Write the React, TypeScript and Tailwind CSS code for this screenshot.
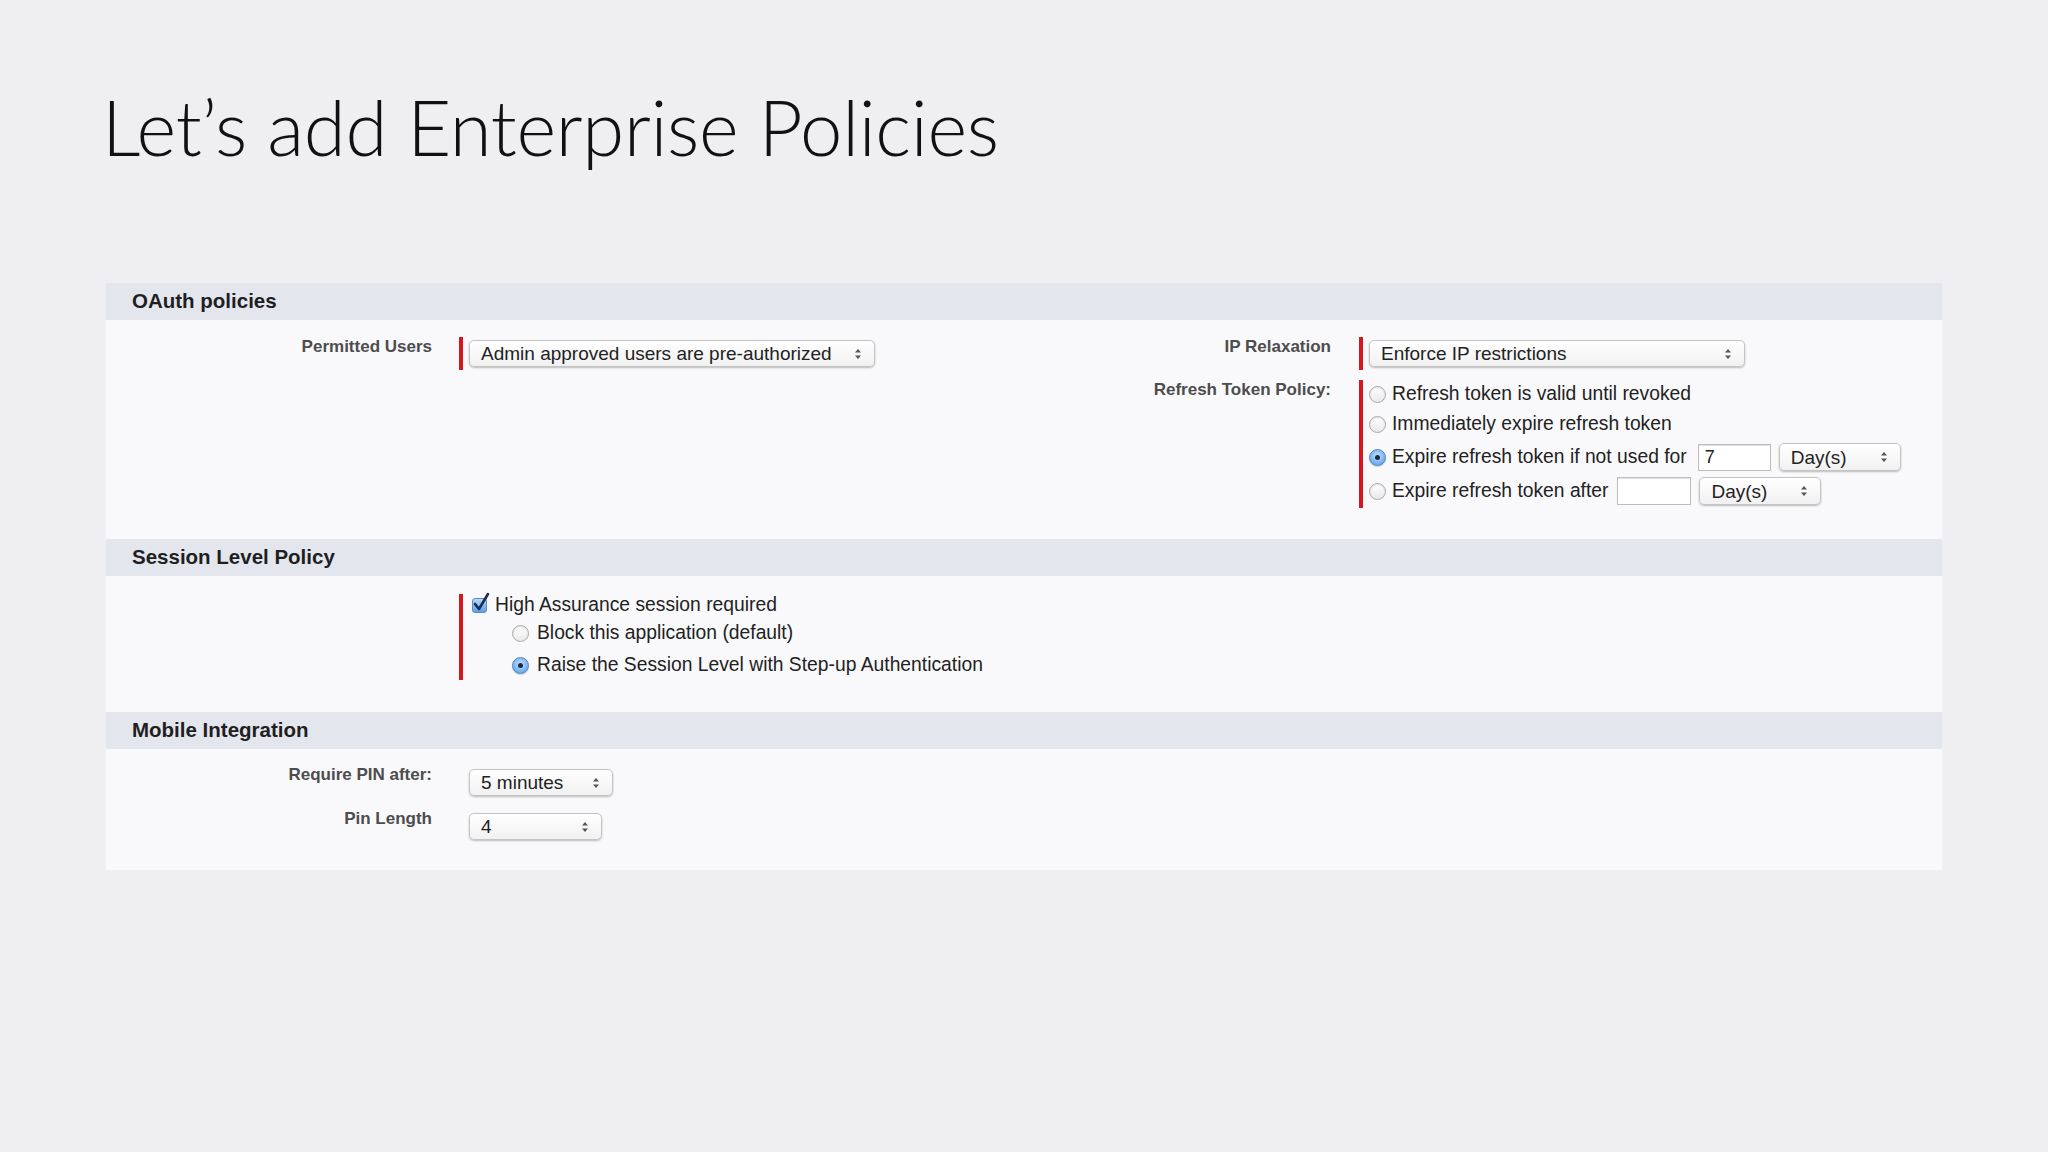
import React from 'react';

const ui = { fontFamily: '"Liberation Sans", Arial, sans-serif' };

const Arrows = () => (
  <svg width="8" height="12" viewBox="0 0 8 12" className="shrink-0">
    <polygon points="4,1 7,4.6 1,4.6" fill="#555" />
    <polygon points="1,7.4 7,7.4 4,11" fill="#555" />
  </svg>
);

const Select = ({ value, className }: { value: string; className: string }) => (
  <div
    className={`flex items-center justify-between rounded-[5px] border border-[#c4c4c4] bg-gradient-to-b from-white to-[#f1f1f1] pl-[11px] pr-[12px] text-[19px] leading-none text-[#222] shadow-[0_1px_2px_rgba(0,0,0,0.25)] ${className}`}
  >
    <span>{value}</span>
    <Arrows />
  </div>
);

const TextInput = ({ value, className }: { value?: string; className: string }) => (
  <div
    className={`flex items-center border border-[#bdbdbd] bg-white pl-[6px] text-[18px] text-[#222] shadow-[inset_0_1px_1px_rgba(0,0,0,0.12)] ${className}`}
  >
    {value}
  </div>
);

const Radio = ({ checked }: { checked?: boolean }) =>
  checked ? (
    <span className="flex h-[17px] w-[17px] shrink-0 items-center justify-center rounded-full border border-[#4f86c6] bg-[radial-gradient(circle_at_50%_40%,#c4e2ff,#4b95e8)] shadow-[0_1px_1px_rgba(0,0,0,0.2)]">
      <span className="h-[5px] w-[5px] rounded-full bg-[#1d2940]" />
    </span>
  ) : (
    <span className="h-[17px] w-[17px] shrink-0 rounded-full border border-[#a9a9a9] bg-gradient-to-b from-white to-[#e9e9e9] shadow-[inset_0_1px_2px_rgba(0,0,0,0.12)]" />
  );

const Checkbox = () => (
  <span className="relative h-[15px] w-[15px] shrink-0 rounded-[3px] border border-[#5b8cc4] bg-gradient-to-b from-[#b9d8f7] to-[#5d9fe6]">
    <svg width="18" height="20" viewBox="0 0 18 20" className="absolute -top-[7px] left-[0px]">
      <path d="M2 12 L6 17 L15 2" fill="none" stroke="#1c2d55" strokeWidth="2.6" strokeLinecap="round" strokeLinejoin="round" />
    </svg>
  </span>
);

const Label = ({ children }: { children: React.ReactNode }) => (
  <div className="w-[326px] shrink-0 text-right text-[17px] font-bold leading-[20px] text-[#4d4d4d]">{children}</div>
);

const Bar = ({ className }: { className: string }) => (
  <div className={`ml-[27px] w-[4px] shrink-0 bg-[#d8161d] ${className}`} />
);

const SectionHeader = ({ title }: { title: string }) => (
  <div className="flex h-[37px] items-center bg-[#e4e6ee] pl-[26px] text-[20.5px] font-bold text-[#1f1f1f]">{title}</div>
);

export default function App() {
  return (
    <div className="min-h-screen w-full bg-[#efeff1] pb-[40px]" style={ui}>
      <h1
        className="ml-[102px] pt-[89px] text-[76px] font-light leading-none tracking-[-0.3px] text-[#111]"
        style={{ fontFamily: 'Lato, "Open Sans", sans-serif' }}
      >
        Let’s add Enterprise Policies
      </h1>

      <div className="ml-[106px] mt-[118px] w-[1836px] bg-[#f9f9fb]">
        {/* OAuth policies */}
        <SectionHeader title="OAuth policies" />
        <div className="flex h-[219px] pt-[17px]">
          <div className="flex w-[899px] shrink-0 items-start">
            <Label>Permitted Users</Label>
            <Bar className="h-[33px]" />
            <Select value="Admin approved users are pre-authorized" className="ml-[6px] mt-[3px] h-[27px] w-[406px]" />
          </div>
          <div className="flex flex-col">
            <div className="flex items-start">
              <Label>IP Relaxation</Label>
              <Bar className="ml-[28px] h-[33px]" />
              <Select value="Enforce IP restrictions" className="ml-[6px] mt-[3px] h-[27px] w-[376px]" />
            </div>
            <div className="mt-[10px] flex items-start">
              <Label>Refresh Token Policy:</Label>
              <Bar className="ml-[28px] h-[128px]" />
              <div className="ml-[6px] flex flex-col text-[19.3px] text-[#222]">
                <div className="flex h-[28px] items-center">
                  <Radio />
                  <span className="ml-[6px]">Refresh token is valid until revoked</span>
                </div>
                <div className="flex h-[32px] items-center">
                  <Radio />
                  <span className="ml-[6px]">Immediately expire refresh token</span>
                </div>
                <div className="flex h-[34px] items-center">
                  <Radio checked />
                  <span className="ml-[6px]">Expire refresh token if not used for</span>
                  <TextInput value="7" className="ml-[11px] h-[27px] w-[73px]" />
                  <Select value="Day(s)" className="ml-[8px] h-[28px] w-[122px]" />
                </div>
                <div className="flex h-[34px] items-center">
                  <Radio />
                  <span className="ml-[6px]">Expire refresh token after</span>
                  <TextInput className="ml-[9px] h-[28px] w-[74px]" />
                  <Select value="Day(s)" className="ml-[8px] h-[28px] w-[122px]" />
                </div>
              </div>
            </div>
          </div>
        </div>

        {/* Session Level Policy */}
        <SectionHeader title="Session Level Policy" />
        <div className="flex h-[136px] items-start pt-[18px]">
          <div className="w-[326px] shrink-0" />
          <Bar className="h-[86px]" />
          <div className="ml-[6px] flex flex-col text-[19.3px] text-[#222]">
            <div className="flex h-[23px] items-center pl-[3px]">
              <Checkbox />
              <span className="ml-[8px]">High Assurance session required</span>
            </div>
            <div className="flex h-[33px] items-center pl-[43px]">
              <Radio />
              <span className="ml-[8px]">Block this application (default)</span>
            </div>
            <div className="flex h-[30px] items-center pl-[43px]">
              <Radio checked />
              <span className="ml-[8px]">Raise the Session Level with Step-up Authentication</span>
            </div>
          </div>
        </div>

        {/* Mobile Integration */}
        <SectionHeader title="Mobile Integration" />
        <div className="flex h-[121px] flex-col pt-[16px]">
          <div className="flex items-start">
            <Label>Require PIN after:</Label>
            <Select value="5 minutes" className="ml-[37px] mt-[4px] h-[27px] w-[144px]" />
          </div>
          <div className="mt-[13px] flex items-start">
            <Label>Pin Length</Label>
            <Select value="4" className="ml-[37px] mt-[4px] h-[27px] w-[133px]" />
          </div>
        </div>
      </div>
    </div>
  );
}
